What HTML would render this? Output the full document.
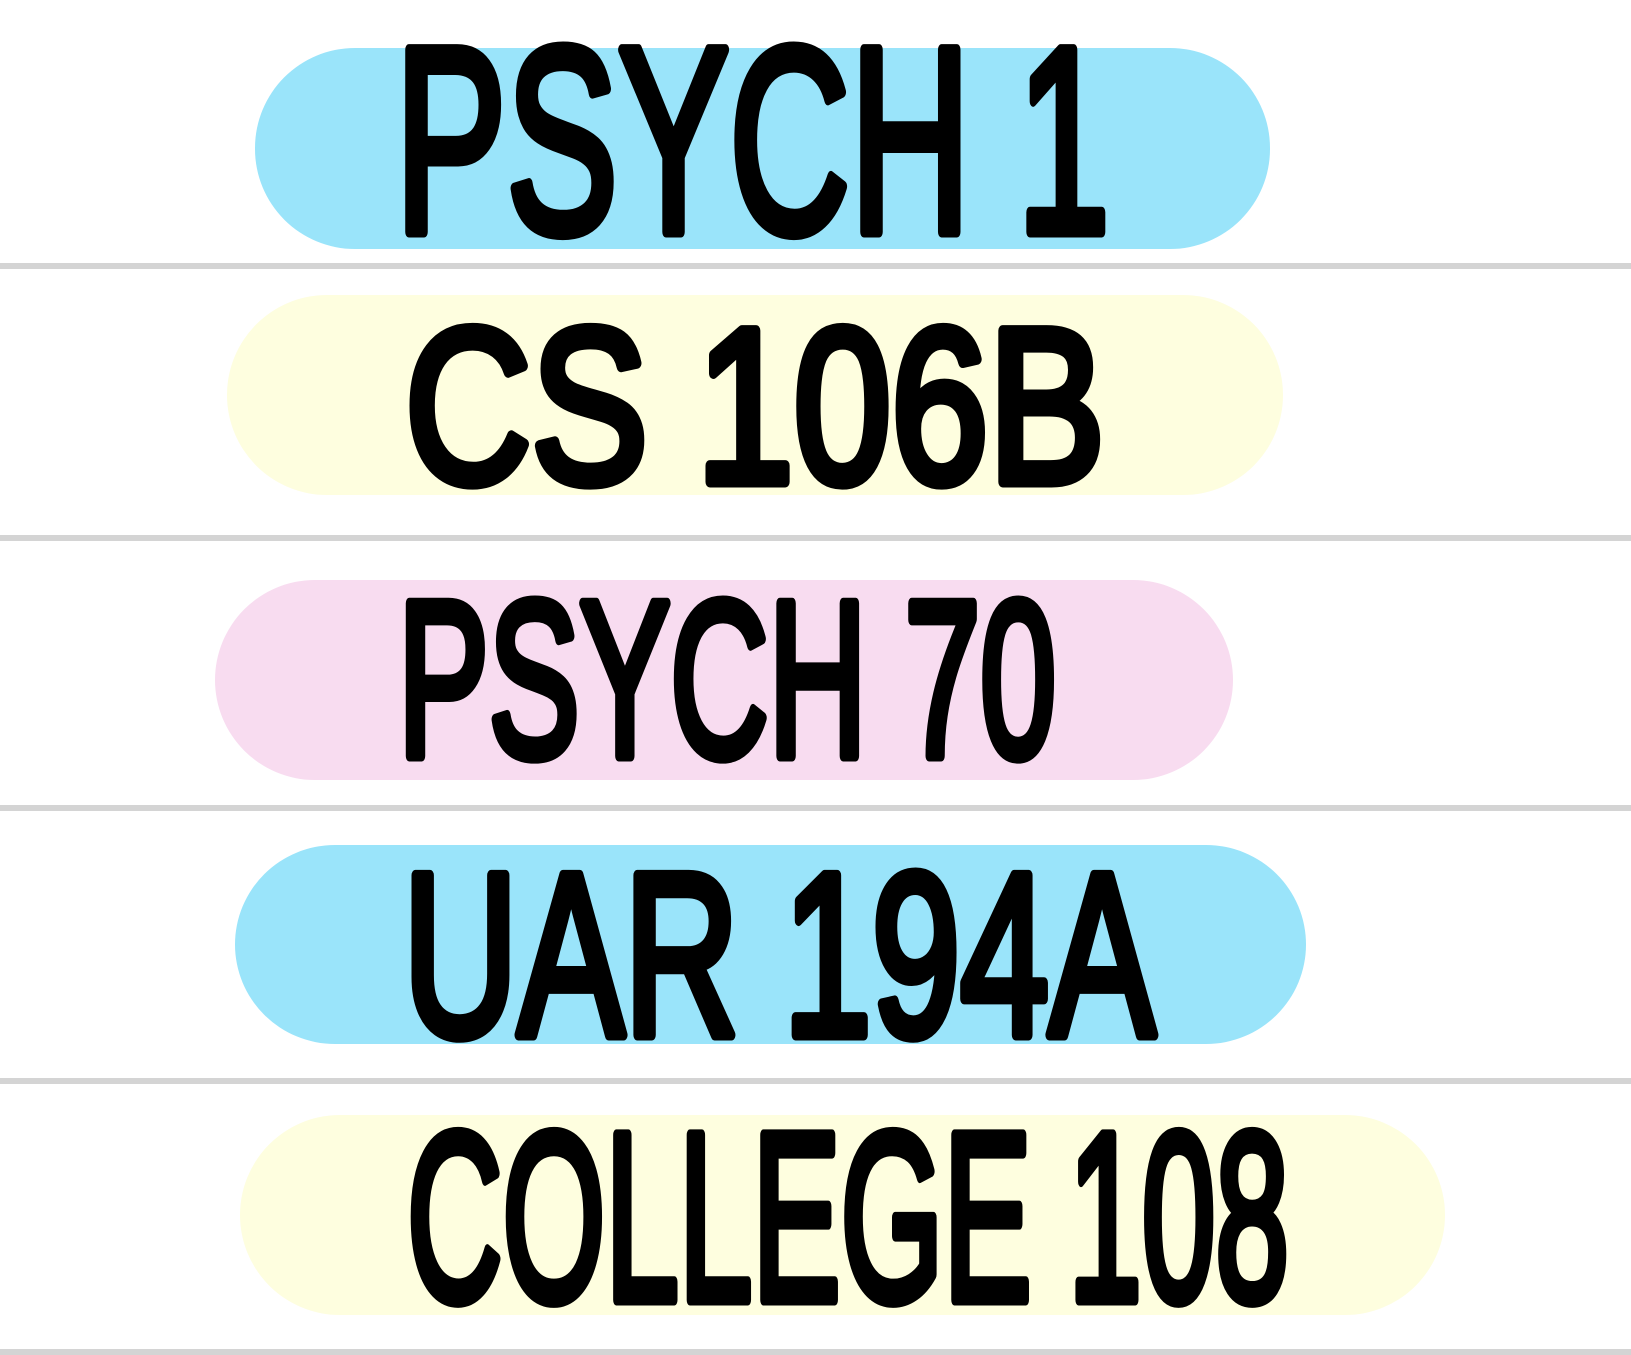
<!DOCTYPE html>
<html><head><meta charset="utf-8"><style>
html,body{margin:0;padding:0;background:#fff;}
body{width:1631px;height:1355px;overflow:hidden;}
svg{display:block}
</style></head><body>
<svg width="1631" height="1355" xmlns="http://www.w3.org/2000/svg">
<rect width="1631" height="1355" fill="#fff"/>
<rect x="255" y="48" width="1015" height="201" rx="100" fill="#9AE4FA"/>
<rect x="0" y="263" width="1631" height="6" fill="#d4d4d4"/>
<rect x="227" y="295" width="1056" height="200" rx="100" fill="#FEFEDF"/>
<rect x="0" y="535" width="1631" height="6" fill="#d4d4d4"/>
<rect x="215" y="580" width="1018" height="200" rx="100" fill="#F8DCF0"/>
<rect x="0" y="805" width="1631" height="6" fill="#d4d4d4"/>
<rect x="235" y="845" width="1071" height="199" rx="100" fill="#9AE4FA"/>
<rect x="0" y="1078" width="1631" height="6" fill="#d4d4d4"/>
<rect x="240" y="1115" width="1205" height="200" rx="100" fill="#FEFEDF"/>
<rect x="0" y="1349" width="1631" height="6" fill="#d4d4d4"/>
<g font-family="Liberation Sans, sans-serif" font-weight="normal" fill="#000" stroke="#000" stroke-width="11" stroke-linejoin="round" stroke-linecap="round">
<text x="395" y="232" font-size="265" textLength="715" lengthAdjust="spacingAndGlyphs">PSYCH 1</text>
<text x="405" y="482" font-size="220" textLength="700" lengthAdjust="spacingAndGlyphs">CS 106B</text>
<text x="398" y="756" font-size="222" textLength="658" lengthAdjust="spacingAndGlyphs">PSYCH 70</text>
<text x="403" y="1035" font-size="232" textLength="752" lengthAdjust="spacingAndGlyphs">UAR 194A</text>
<text x="407" y="1300" font-size="240" textLength="882" lengthAdjust="spacingAndGlyphs">COLLEGE 108</text>
</g>
</svg>
</body></html>
